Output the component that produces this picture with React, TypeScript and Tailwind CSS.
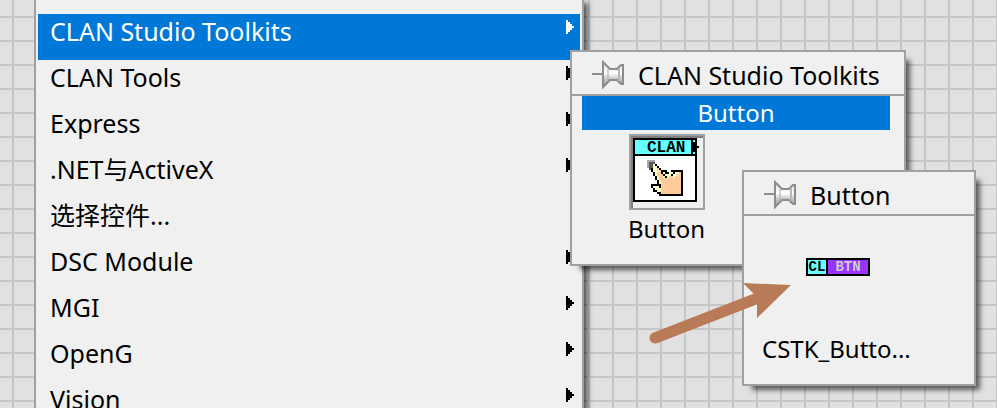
import type { ReactNode } from "react";

type Item = { label: string; submenu: boolean; active?: boolean };

const ITEMS: Item[] = [
  { label: "CLAN Studio Toolkits", submenu: true, active: true },
  { label: "CLAN Tools", submenu: true },
  { label: "Express", submenu: true },
  { label: ".NET与ActiveX", submenu: true },
  { label: "选择控件...", submenu: false },
  { label: "DSC Module", submenu: true },
  { label: "MGI", submenu: true },
  { label: "OpenG", submenu: true },
  { label: "Vision", submenu: true },
];

const SHADES: Record<string, string> = {
  g: "#a8a8a8",
  d: "#5a5a5a",
  k: "#000000",
  y: "#ffffcc",
  p: "#ffcc99",
};

// Pointing hand pressing a grey button, one character per icon pixel.
const HAND = [
  "gggg..............",
  "gddd..............",
  "gddyk.............",
  "gddyyk............",
  ".dkyypk...........",
  "..kyyypkkk..kkkkkk",
  "...kyppkykkyykyypk",
  "...kypppkyyykyyppk",
  "....kyppykyppypppk",
  "....kypppppppppppk",
  ".....kyppppppppppk",
  ".....kyppppppppppk",
  "..kkkkkppppppppppk",
  "..kyyykppppppppppk",
  "...kyyyppppppppppk",
  "...kkyyppppppppppk",
  ".....kkppppppppppk",
  "......kkkkkkkkkkkk",
];

function SubmenuArrow() {
  return (
    <svg width="8" height="14" viewBox="0 0 4 7" shapeRendering="crispEdges" className="mt-1.5 shrink-0" aria-hidden="true">
      <path d="M0 0H1V1H2V2H3V3H4V4H3V5H2V6H1V7H0Z" fill="currentColor" />
    </svg>
  );
}

function PinIcon() {
  return (
    <svg width="34" height="30" viewBox="0 0 34 30" aria-hidden="true">
      <defs>
        <linearGradient id="pin-body" x1="0" y1="0" x2="0" y2="1">
          <stop offset="0" stopColor="#d6d6d6" />
          <stop offset="0.45" stopColor="#ffffff" />
          <stop offset="0.65" stopColor="#cccccc" />
          <stop offset="1" stopColor="#989898" />
        </linearGradient>
      </defs>
      <path d="M0 14H11" stroke="#8c8c8c" strokeWidth="2" />
      <path d="M11 2L18 9H25L29 5H31V24H29L25 20H18L11 27Z" fill="url(#pin-body)" stroke="#8c8c8c" strokeWidth="2" />
      <path d="M16 9V20" stroke="#a8a8a8" strokeWidth="1" />
      <path d="M27 8V21" stroke="#b8b8b8" strokeWidth="2" />
    </svg>
  );
}

function PaletteIcon() {
  return (
    <svg width="66" height="64" viewBox="0 0 66 64" shapeRendering="crispEdges" aria-hidden="true">
      <rect width="64" height="64" fill="#000000" />
      <rect x="2" y="2" width="60" height="14" fill="#66ffff" />
      <rect x="2" y="18" width="60" height="44" fill="#ffffff" />
      <path d="M58 2H60V4H62V14H60V16H58Z" fill="#000000" />
      <rect x="64" y="8" width="2" height="2" fill="#000000" />
      {HAND.flatMap((row, y) =>
        [...row].map((c, x) =>
          c === "." ? null : (
            <rect key={`${x}-${y}`} x={14 + x * 2} y={22 + y * 2} width="2" height="2" fill={SHADES[c]} />
          ),
        ),
      )}
      <text x="14" y="14" fontSize="16" fontWeight="700" fontFamily="'Liberation Mono', monospace">
        CLAN
      </text>
    </svg>
  );
}

function Popup({ title, className, children }: { title: string; className: string; children: ReactNode }) {
  return (
    <section
      className={`absolute flex h-[216px] flex-col border-2 border-[#a0a0a0] bg-[#f0f0f0] shadow-[7px_7px_5px_-3px_rgba(0,0,0,0.6)] ${className}`}
    >
      <header className="flex h-11 shrink-0 items-center gap-3 border-b-2 border-[#a0a0a0] pt-1 pl-5">
        <PinIcon />
        <h2 className="text-[25px] whitespace-nowrap">{title}</h2>
      </header>
      {children}
    </section>
  );
}

export default function App() {
  return (
    <main className="relative h-screen overflow-hidden bg-[#e1e1e1] bg-[linear-gradient(to_right,#c6c6c6_2px,transparent_2px),linear-gradient(to_bottom,#c6c6c6_2px,transparent_2px)] bg-[length:24px_24px] bg-[position:12px_16px] pl-[34px] font-['Noto_Sans','Noto_Sans_CJK_SC',sans-serif] text-[24px] leading-[34px] text-black">
      <nav className="w-[550px] border-x-2 border-[#a0a0a0] bg-[#f0f0f0] px-0.5 pt-3.5 shadow-[7px_0_5px_-3px_rgba(0,0,0,0.6)]">
        {ITEMS.map((item) => (
          <button
            key={item.label}
            type="button"
            className={`flex h-[46px] w-full items-start justify-between pr-1.5 pl-3 text-left text-[25px] ${
              item.active ? "bg-[#0078d7] text-white" : ""
            }`}
          >
            <span>{item.label}</span>
            {item.submenu && <SubmenuArrow />}
          </button>
        ))}
      </nav>

      <Popup title="CLAN Studio Toolkits" className="top-[50px] left-[570px] w-[336px]">
        <div className="mr-3.5 ml-2.5 bg-[#0078d7] text-center text-white">Button</div>
        <button type="button" className="mt-1 ml-14 flex flex-col items-center self-start">
          <span className="flex h-[76px] w-[76px] border-2 border-[#a0a0a0]">
            <span className="flex flex-1 border-t-2 border-l-2 border-[#808080] bg-[#f0f0f0]">
              <PaletteIcon />
            </span>
          </span>
          <span className="mt-0.5">Button</span>
        </button>
      </Popup>

      <Popup title="Button" className="top-[170px] left-[742px] w-[234px]">
        <button type="button" className="flex flex-1 flex-col items-start justify-between pt-[42px] pb-[18px] pl-[18px]">
          <span className="ml-11 flex h-[18px] w-16 border-2 border-black font-['Liberation_Mono',monospace] text-[14px] leading-[14px] font-bold">
            <span className="w-5 border-r-2 border-black bg-[#66ffff] text-center">CL</span>
            <span className="flex-1 bg-[#9933ff] text-center text-[#cccccc]">BTN</span>
          </span>
          <span>CSTK_Butto...</span>
        </button>
      </Popup>

      <svg width="144" height="64" viewBox="0 0 144 64" className="absolute top-[281px] left-[648px]" aria-hidden="true">
        <path d="M7 57L110 17" stroke="#b97a57" strokeWidth="11" strokeLinecap="round" />
        <path d="M95 2L143 4L109 37V22L106 13Z" fill="#b97a57" />
      </svg>
    </main>
  );
}
